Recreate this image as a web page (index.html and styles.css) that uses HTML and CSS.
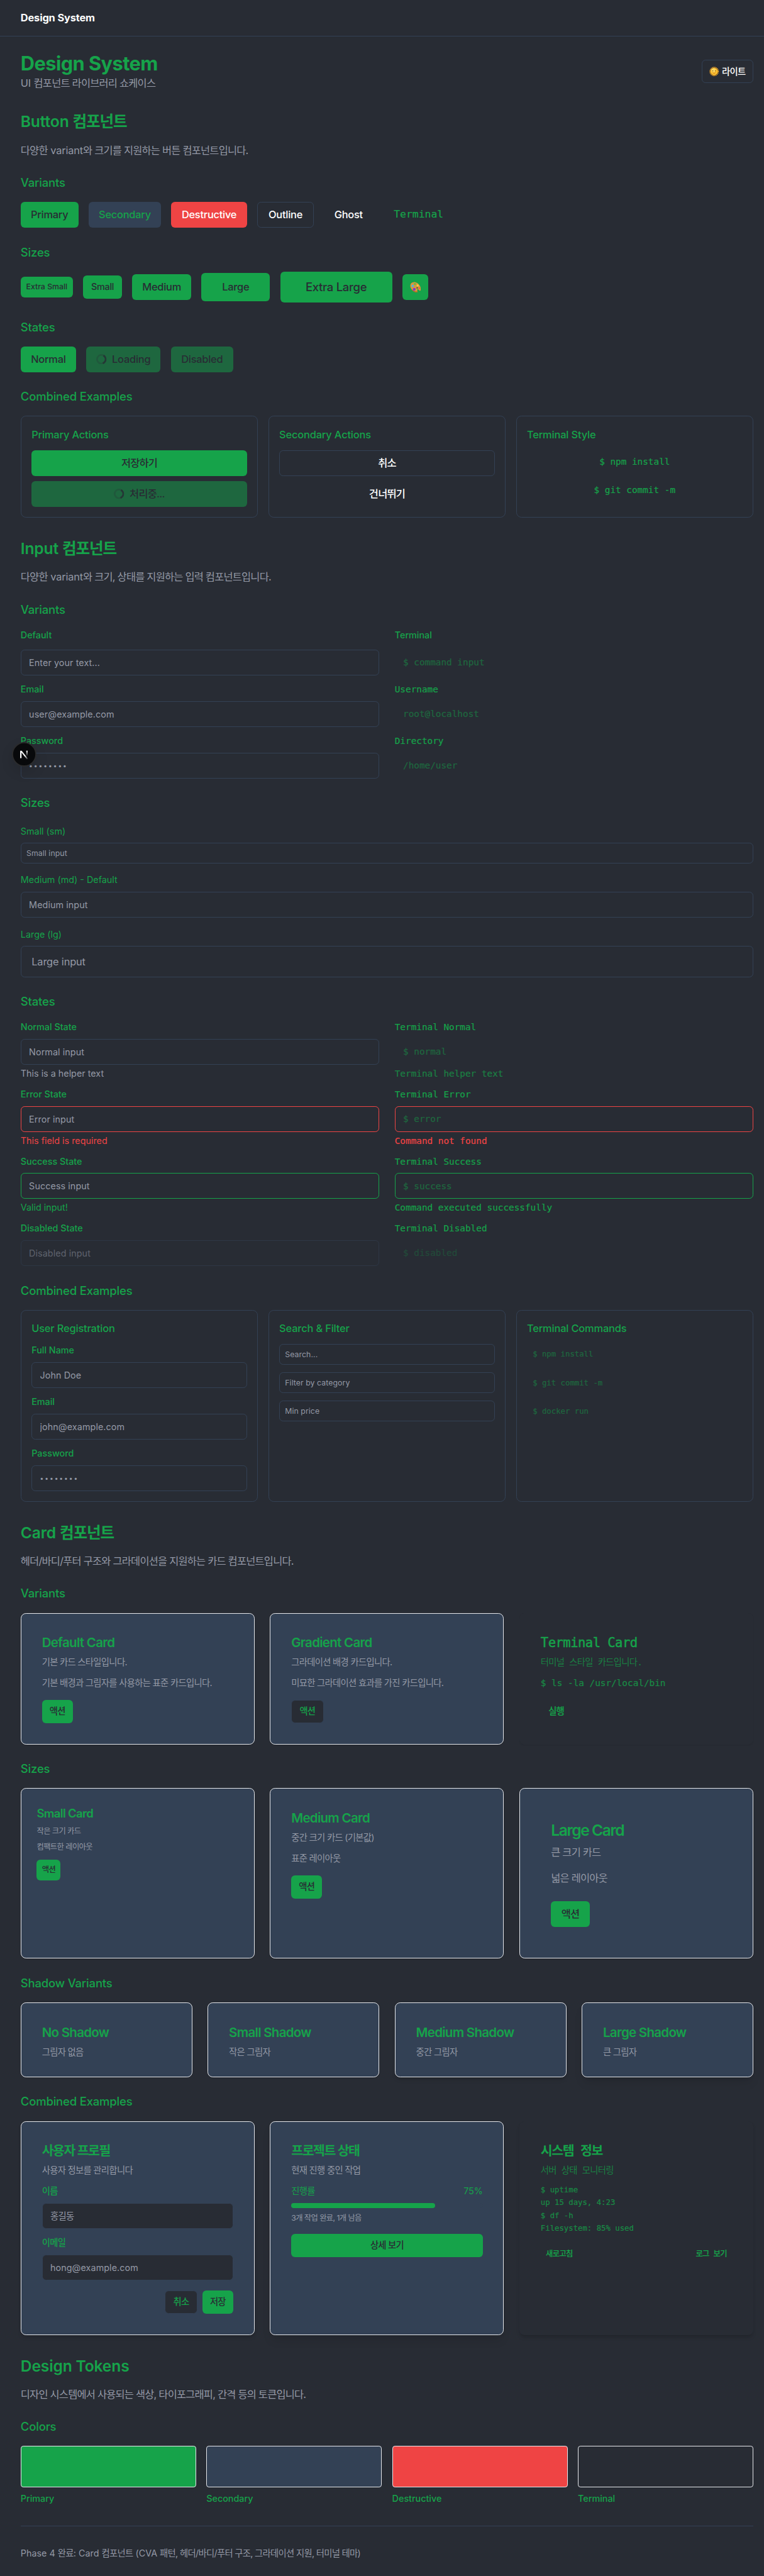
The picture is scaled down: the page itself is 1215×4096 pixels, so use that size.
FILE: index.html
```html
<!DOCTYPE html>
<html lang="ko">
<head>
<meta charset="utf-8">
<title>Design System</title>
<link rel="stylesheet" href="styles.css">
</head>
<body>
<svg class="defs" width="0" height="0" aria-hidden="true">
  <symbol id="spinner" viewBox="0 0 24 24">
    <g transform="rotate(160 12 12)">
      <circle cx="12" cy="12" r="10" fill="none" stroke="currentColor" stroke-width="4" opacity=".25"/>
      <path fill="currentColor" opacity=".75" d="M4 12a8 8 0 018-8V0C5.373 0 0 5.373 0 12h4zm2 5.291A7.962 7.962 0 014 12H0c0 3.042 1.135 5.824 3 7.938l3-2.647z"/>
    </g>
  </symbol>
</svg>
<div class="page">
  <header class="topbar">Design System</header>
  <main class="main">
    <div class="intro">
      <div>
        <h1>Design System</h1>
        <p class="lead">UI <span class="ko">컴포넌트 라이브러리 쇼케이스</span></p>
      </div>
      <button class="btn btn-sm btn-outline theme-toggle">
        <svg viewBox="0 0 32 32" width="15" height="15"><circle cx="16" cy="16" r="13.5" fill="none" stroke="#f9a825" stroke-width="4" stroke-dasharray="2.6 1.64"/><circle cx="16" cy="16" r="12" fill="#fdc02f"/><circle cx="14" cy="12" r="7" fill="#ffd75e"/><circle cx="11.5" cy="14" r="1.7" fill="#6b4a1c"/><circle cx="20.5" cy="14" r="1.7" fill="#6b4a1c"/><path d="M11 20q5 4 10 0" fill="none" stroke="#b5651d" stroke-width="1.6"/></svg>
        <span class="ko">라이트</span>
      </button>
    </div>

    <section class="section">
      <h2>Button <span class="ko">컴포넌트</span></h2>
      <p class="desc"><span class="ko">다양한</span> variant<span class="ko">와 크기를 지원하는 버튼 컴포넌트입니다.</span></p>
      <h3>Variants</h3>
      <div class="row">
        <button class="btn w-primary">Primary</button>
        <button class="btn btn-secondary w-secondary">Secondary</button>
        <button class="btn btn-destructive w-destructive">Destructive</button>
        <button class="btn btn-outline w-outline">Outline</button>
        <button class="btn btn-ghost w-ghost">Ghost</button>
        <button class="btn btn-terminal">Terminal</button>
      </div>
      <h3>Sizes</h3>
      <div class="row">
        <button class="btn btn-xs w-xs">Extra Small</button>
        <button class="btn btn-sm w-sm">Small</button>
        <button class="btn w-md">Medium</button>
        <button class="btn btn-lg w-lg">Large</button>
        <button class="btn btn-xl w-xl">Extra Large</button>
        <button class="btn btn-icon"><svg viewBox="0 0 32 32" width="17" height="17"><path d="M8 2C14-1 24 3 29 12c3 6 4 12 1 14-3 1-4-4-7-4s-2 3-1 5c1 3-1 5-5 4C8 29 0 19 1 10c1-4 3-7 7-8z" fill="#d9973f"/><path d="M2 17c3 8 9 13 16 14 3 0 5-1 4-4-1 2-4 2-7 1C9 26 4 22 2 17z" fill="#a8641f"/><circle cx="8" cy="12" r="3.4" fill="#4ab4e8"/><circle cx="14.5" cy="6.5" r="3.2" fill="#6bbf3a"/><circle cx="22.5" cy="11" r="3" fill="#f4d13c"/><circle cx="27" cy="19" r="2.5" fill="#ee5a45"/><circle cx="12.5" cy="22" r="4" fill="#8a34c9"/><ellipse cx="21" cy="18" rx="2" ry="2.4" fill="#16703a"/></svg></button>
      </div>
      <h3>States</h3>
      <div class="row">
        <button class="btn w-normal">Normal</button>
        <button class="btn is-off w-loading"><svg class="spin"><use href="#spinner"/></svg>Loading</button>
        <button class="btn is-off w-disabled">Disabled</button>
      </div>
      <h3>Combined Examples</h3>
      <div class="grid3 tight">
        <div class="panel">
          <h4>Primary Actions</h4>
          <div class="stack8">
            <button class="btn ko">저장하기</button>
            <button class="btn is-off"><svg class="spin"><use href="#spinner"/></svg><span class="ko">처리중...</span></button>
          </div>
        </div>
        <div class="panel">
          <h4>Secondary Actions</h4>
          <div class="stack8">
            <button class="btn btn-outline ko">취소</button>
            <button class="btn btn-ghost ko">건너뛰기</button>
          </div>
        </div>
        <div class="panel">
          <h4>Terminal Style</h4>
          <div class="stack8">
            <button class="btn btn-sm btn-terminal">$ npm install</button>
            <button class="btn btn-sm btn-terminal">$ git commit -m</button>
          </div>
        </div>
      </div>
    </section>

    <section class="section">
      <h2>Input <span class="ko">컴포넌트</span></h2>
      <p class="desc"><span class="ko">다양한</span> variant<span class="ko">와 크기, 상태를 지원하는 입력 컴포넌트입니다.</span></p>
      <h3>Variants</h3>
      <div class="grid2">
        <div class="fields">
          <div class="field wide"><label>Default</label><input placeholder="Enter your text..."></div>
          <div class="field"><label>Email</label><input placeholder="user@example.com"></div>
          <div class="field"><label>Password</label><input class="dots" placeholder="••••••••"></div>
        </div>
        <div class="fields">
          <div class="field wide"><label>Terminal</label><input class="term" placeholder="$ command input"></div>
          <div class="field"><label class="mono">Username</label><input class="term" placeholder="root@localhost"></div>
          <div class="field"><label class="mono">Directory</label><input class="term" placeholder="/home/user"></div>
        </div>
      </div>
      <h3>Sizes</h3>
      <div class="fields sizes">
        <div class="field"><label>Small (sm)</label><input class="in-sm" placeholder="Small input"></div>
        <div class="field"><label>Medium (md) - Default</label><input placeholder="Medium input"></div>
        <div class="field"><label>Large (lg)</label><input class="in-lg" placeholder="Large input"></div>
      </div>
      <h3>States</h3>
      <div class="grid2">
        <div class="fields">
          <div class="field"><label>Normal State</label><input placeholder="Normal input"><p class="help">This is a helper text</p></div>
          <div class="field"><label>Error State</label><input class="err" placeholder="Error input"><p class="help help-err">This field is required</p></div>
          <div class="field"><label>Success State</label><input class="ok" placeholder="Success input"><p class="help help-ok">Valid input!</p></div>
          <div class="field"><label>Disabled State</label><input class="off" placeholder="Disabled input"></div>
        </div>
        <div class="fields mono">
          <div class="field"><label>Terminal Normal</label><input class="term" placeholder="$ normal"><p class="help help-term">Terminal helper text</p></div>
          <div class="field"><label>Terminal Error</label><input class="term err" placeholder="$ error"><p class="help help-err">Command not found</p></div>
          <div class="field"><label>Terminal Success</label><input class="term ok" placeholder="$ success"><p class="help help-ok">Command executed successfully</p></div>
          <div class="field"><label>Terminal Disabled</label><input class="term off" placeholder="$ disabled"></div>
        </div>
      </div>
      <h3>Combined Examples</h3>
      <div class="grid3 tight">
        <div class="panel">
          <h4>User Registration</h4>
          <div class="fields">
            <div class="field"><label>Full Name</label><input placeholder="John Doe"></div>
            <div class="field"><label>Email</label><input placeholder="john@example.com"></div>
            <div class="field"><label>Password</label><input class="dots" placeholder="••••••••"></div>
          </div>
        </div>
        <div class="panel">
          <h4>Search &amp; Filter</h4>
          <div class="fields">
            <input class="in-sm" placeholder="Search...">
            <input class="in-sm" placeholder="Filter by category">
            <input class="in-sm" placeholder="Min price">
          </div>
        </div>
        <div class="panel">
          <h4>Terminal Commands</h4>
          <div class="fields">
            <input class="in-sm term" placeholder="$ npm install">
            <input class="in-sm term" placeholder="$ git commit -m">
            <input class="in-sm term" placeholder="$ docker run">
          </div>
        </div>
      </div>
    </section>

    <section class="section">
      <h2>Card <span class="ko">컴포넌트</span></h2>
      <p class="desc ko">헤더/바디/푸터 구조와 그라데이션을 지원하는 카드 컴포넌트입니다.</p>
      <h3>Variants</h3>
      <div class="grid3">
        <article class="card">
          <h5>Default Card</h5>
          <p class="sub ko">기본 카드 스타일입니다.</p>
          <p class="body ko">기본 배경과 그림자를 사용하는 표준 카드입니다.</p>
          <div class="actions"><button class="btn btn-sm w-act ko">액션</button></div>
        </article>
        <article class="card">
          <h5>Gradient Card</h5>
          <p class="sub ko">그라데이션 배경 카드입니다.</p>
          <p class="body ko">미묘한 그라데이션 효과를 가진 카드입니다.</p>
          <div class="actions"><button class="btn btn-sm btn-dark ko">액션</button></div>
        </article>
        <article class="card card-term mono">
          <h5>Terminal Card</h5>
          <p class="sub ko">터미널 스타일 카드입니다.</p>
          <p class="body">$ ls -la /usr/local/bin</p>
          <div class="actions"><button class="btn btn-sm btn-terminal strong ko">실행</button></div>
        </article>
      </div>
      <h3>Sizes</h3>
      <div class="grid3">
        <article class="card card-sm">
          <h5>Small Card</h5>
          <p class="sub ko">작은 크기 카드</p>
          <p class="body ko">컴팩트한 레이아웃</p>
          <div class="actions"><button class="btn btn-xs w-act-xs ko">액션</button></div>
        </article>
        <article class="card">
          <h5>Medium Card</h5>
          <p class="sub ko">중간 크기 카드 (기본값)</p>
          <p class="body ko">표준 레이아웃</p>
          <div class="actions"><button class="btn btn-sm w-act ko">액션</button></div>
        </article>
        <article class="card card-lg">
          <h5>Large Card</h5>
          <p class="sub ko">큰 크기 카드</p>
          <p class="body ko">넓은 레이아웃</p>
          <div class="actions"><button class="btn w-act-lg ko">액션</button></div>
        </article>
      </div>
      <h3>Shadow Variants</h3>
      <div class="grid4">
        <article class="card short sh-none"><h5>No Shadow</h5><p class="sub ko">그림자 없음</p></article>
        <article class="card short"><h5>Small Shadow</h5><p class="sub ko">작은 그림자</p></article>
        <article class="card short sh-md"><h5>Medium Shadow</h5><p class="sub ko">중간 그림자</p></article>
        <article class="card short sh-lg"><h5>Large Shadow</h5><p class="sub ko">큰 그림자</p></article>
      </div>
      <h3>Combined Examples</h3>
      <div class="grid3">
        <article class="card sh-md">
          <h5 class="ko-title">사용자 프로필</h5>
          <p class="sub ko">사용자 정보를 관리합니다</p>
          <div class="fields profile">
            <div class="field"><label class="ko">이름</label><input class="fill ko" placeholder="홍길동"></div>
            <div class="field"><label class="ko">이메일</label><input class="fill" placeholder="hong@example.com"></div>
          </div>
          <div class="actions end"><button class="btn btn-sm btn-dark ko">취소</button><button class="btn btn-sm w-act ko">저장</button></div>
        </article>
        <article class="card sh-lg">
          <h5 class="ko-title">프로젝트 상태</h5>
          <p class="sub ko">현재 진행 중인 작업</p>
          <div class="meter-row"><span class="ko">진행률</span><span>75%</span></div>
          <div class="meter"><div class="meter-bar" style="width:75%"></div></div>
          <p class="note ko">3개 작업 완료, 1개 남음</p>
          <div class="stack8"><button class="btn btn-sm ko">상세 보기</button></div>
        </article>
        <article class="card card-term sh-md mono">
          <h5 class="ko-title">시스템 정보</h5>
          <p class="sub ko">서버 상태 모니터링</p>
          <div class="log"><p>$ uptime</p><p>up 15 days, 4:23</p><p>$ df -h</p><p>Filesystem: 85% used</p></div>
          <div class="actions between"><button class="btn btn-xs btn-terminal strong ko">새로고침</button><button class="btn btn-xs btn-terminal strong ko">로그 보기</button></div>
        </article>
      </div>
    </section>

    <section class="section">
      <h2>Design Tokens</h2>
      <p class="desc ko">디자인 시스템에서 사용되는 색상, 타이포그래피, 간격 등의 토큰입니다.</p>
      <h3>Colors</h3>
      <div class="grid4 tight">
        <div class="token"><div class="swatch c-primary"></div><p>Primary</p></div>
        <div class="token"><div class="swatch c-secondary"></div><p>Secondary</p></div>
        <div class="token"><div class="swatch c-destructive"></div><p>Destructive</p></div>
        <div class="token"><div class="swatch"></div><p>Terminal</p></div>
      </div>
    </section>

    <footer class="foot">Phase 4 <span class="ko">완료</span>: Card <span class="ko">컴포넌트</span> (CVA <span class="ko">패턴, 헤더/바디/푸터 구조, 그라데이션 지원, 터미널 테마)</span></footer>
  </main>
  <div class="dev-badge">
    <svg viewBox="0 0 40 40" width="38" height="38">
      <defs>
        <linearGradient id="na" x1="22" y1="22" x2="26.5" y2="28" gradientUnits="userSpaceOnUse"><stop stop-color="#fff"/><stop offset="1" stop-color="#fff" stop-opacity="0"/></linearGradient>
        <linearGradient id="nb" x1="0" y1="14" x2="0" y2="23" gradientUnits="userSpaceOnUse"><stop stop-color="#fff"/><stop offset="1" stop-color="#fff" stop-opacity="0"/></linearGradient>
      </defs>
      <circle cx="20" cy="20" r="19" fill="#08090b" stroke="#2b2b2c" stroke-width="1.8"/>
      <path d="M13.4 26.2V14h2.5l10.2 12.9-1.6 1.3L15.6 17v9.2z" fill="url(#na)"/>
      <rect x="23.4" y="14" width="2.2" height="9" fill="url(#nb)"/>
    </svg>
  </div>
</div>
</body>
</html>
```
FILE: styles.css
```css
:root {
  --bg: #282c34;
  --green: #16a34a;
  --slate: #334155;
  --red: #ef4444;
  --muted: #9499a6;
  --line: #e5e7eb;
  --sans: Inter, "Noto Sans CJK KR", sans-serif;
  --mono: "DejaVu Sans Mono", "Noto Sans CJK KR", monospace;
}

* { box-sizing: border-box; margin: 0; }

body { background: var(--bg); overflow: hidden; }

.defs { position: absolute; }

.page {
  position: relative;
  zoom: 1.0257;
  width: 1185px;
  height: 3993px;
  overflow: hidden;
  background: var(--bg);
  color: var(--green);
  font: 400 16px/24px var(--sans);
  letter-spacing: -0.01em;
}

.ko { letter-spacing: -0.048em; }
.mono { font-family: var(--mono); letter-spacing: 0; }

.topbar {
  height: 57px;
  padding: 16px 32px;
  border-bottom: 1px solid var(--slate);
  color: #fff;
  font-weight: 700;
}

.main { width: 1200px; padding: 24px 32px; }

.intro { display: flex; justify-content: space-between; align-items: center; }

h1 { font-size: 30px; line-height: 36px; font-weight: 700; letter-spacing: -0.018em; }
h2 { font-size: 24px; line-height: 32px; font-weight: 600; }
h3 { margin: 24px 0 16px; font-size: 18px; line-height: 28px; font-weight: 500; }
h4 { margin-bottom: 12px; font-size: 16px; line-height: 24px; font-weight: 500; }
h5 { font-size: 20px; line-height: 28px; font-weight: 600; letter-spacing: -0.035em; }
.ko-title { letter-spacing: -0.07em; }

.lead, .desc { color: var(--muted); }
.section { margin-top: 32px; }
.desc { margin-top: 16px; }

.row { display: flex; align-items: center; gap: 16px; }
.grid2 { display: grid; grid-template-columns: repeat(2, 1fr); gap: 24px; }
.grid3 { display: grid; grid-template-columns: repeat(3, 1fr); gap: 24px; }
.grid4 { display: grid; grid-template-columns: repeat(4, 1fr); gap: 24px; }
.tight { gap: 16px; }
.stack8 { display: flex; flex-direction: column; gap: 8px; }

.panel { padding: 16px; border: 1px solid var(--slate); border-radius: 8px; }

/* buttons */
.btn {
  display: inline-flex;
  align-items: center;
  justify-content: center;
  height: 40px;
  padding: 0 16px;
  border: 0;
  border-radius: 6px;
  background: var(--green);
  color: var(--bg);
  font: 500 16px/24px var(--sans);
  letter-spacing: -0.015em;
  white-space: nowrap;
}
.btn-xs { height: 32px; padding: 0 8px; font-size: 12px; letter-spacing: 0; }
.btn-sm { height: 36px; padding: 0 12px; font-size: 14px; }
.btn-lg { height: 44px; padding: 0 32px; }
.btn-xl { height: 48px; padding: 0 40px; font-size: 18px; }
.btn-icon { width: 40px; padding: 0; }
.btn-secondary { background: var(--slate); color: var(--green); }
.btn-destructive { background: var(--red); color: #fff; }
.btn-outline { border: 1px solid var(--slate); background: none; color: #fff; }
.btn-ghost { background: none; color: #fff; }
.btn-dark { width: 50px; border: 1px solid var(--slate); background: var(--bg); color: var(--green); }
.btn-terminal { background: none; color: var(--green); font-family: var(--mono); font-weight: 400; letter-spacing: 0; -webkit-text-stroke: .2px; }
.btn.ko { letter-spacing: -0.05em; }
.strong { font-weight: 500; }
.is-off { opacity: .5; }
.theme-toggle { width: 80px; gap: 4px; padding: 0; }
.spin { width: 16px; height: 16px; margin-right: 8px; }

.w-primary { width: 89.5px; padding: 0; }
.w-secondary { width: 112px; padding: 0; }
.w-destructive { width: 117.5px; padding: 0; }
.w-outline { width: 87.5px; padding: 0; }
.w-ghost { width: 76px; padding: 0; }
.w-xs { width: 81px; padding: 0; }
.w-sm { width: 60px; padding: 0; }
.w-md { width: 91.5px; padding: 0; }
.w-lg { width: 106px; padding: 0; }
.w-xl { width: 173.5px; padding: 0; }
.w-normal { width: 86px; padding: 0; }
.w-loading { width: 115px; padding: 0; }
.w-disabled { width: 96.5px; padding: 0; }
.w-act { width: 48px; padding: 0; }
.w-act-xs { width: 37px; padding: 0; }
.w-act-lg { width: 60px; padding: 0; }

/* inputs */
.fields { display: flex; flex-direction: column; gap: 12px; }
.field { display: flex; flex-direction: column; gap: 8px; }
.field.wide { gap: 12px; }
label { font-size: 14px; line-height: 20px; font-weight: 500; }
label:not(.ko):not(.mono) { letter-spacing: 0; }
.mono label, label.mono { -webkit-text-stroke: .2px; }
input {
  width: 100%;
  height: 40px;
  padding: 0 12px;
  border: 1px solid var(--slate);
  border-radius: 6px;
  background: none;
  font: 400 14px/20px var(--sans);
  letter-spacing: 0.005em;
}
input::placeholder { color: var(--muted); opacity: 1; }
.in-sm { height: 32px; padding: 0 8px; font-size: 12px; }
.in-lg { height: 48px; padding: 0 16px; font-size: 16px; letter-spacing: -0.01em; }
.dots { font-size: 10px; letter-spacing: 0.19em; }
.term { border-color: transparent; font-family: var(--mono); letter-spacing: 0; }
.term::placeholder { color: var(--green); opacity: .5; -webkit-text-stroke: .2px; }
.err { border-color: var(--red); }
.ok { border-color: var(--green); }
.off { opacity: .5; }
.fill { background: var(--bg); }
input.ko { letter-spacing: -0.048em; }

.help { margin-top: -4px; color: var(--muted); font-size: 14px; line-height: 20px; letter-spacing: 0; }
.help-err { color: var(--red); }
.help-ok { color: var(--green); }
.help-term { color: var(--green); opacity: .7; }
.mono .help { -webkit-text-stroke: .2px; }

.sizes { gap: 16px; margin-top: 20px; }
.sizes label { font-weight: 400; }

/* cards */
.card {
  display: flex;
  flex-direction: column;
  padding: 32px;
  border: 1px solid var(--line);
  border-radius: 8px;
  background: var(--slate);
  box-shadow: 0 1px 2px rgba(0, 0, 0, .05);
}
.sub, .body { color: var(--muted); font-size: 14px; line-height: 20px; }
.sub { margin-top: 6px; }
.body { margin-top: 12px; }
.actions { display: flex; gap: 8px; margin-top: 16px; }
.end { justify-content: flex-end; }
.between { justify-content: space-between; }

.card-sm { padding: 24px; }
.card-sm h5 { font-size: 18px; }
.card-sm .sub, .card-sm .body { font-size: 12px; line-height: 16px; }
.card-sm .body { margin-top: 8px; }
.card-sm .actions { margin-top: 12px; }

.card-lg { padding: 48px; }
.card-lg h5 { font-size: 24px; line-height: 32px; letter-spacing: -0.058em; }
.card-lg .sub, .card-lg .body { font-size: 16px; line-height: 24px; }
.card-lg .body { margin-top: 16px; }
.card-lg .actions { margin-top: 24px; }

.card-term { border-color: transparent; background: var(--bg); }
.card-term h5 { letter-spacing: -0.025em; font-weight: 400; -webkit-text-stroke: .5px; }
.card-term h5.ko-title { font-weight: 600; letter-spacing: -0.07em; -webkit-text-stroke: 0; }
.card-term .sub { color: var(--green); opacity: .7; }
.card-term .body { color: var(--green); opacity: .8; -webkit-text-stroke: .2px; }

.short { padding-bottom: 28px; }
.sh-none { box-shadow: none; }
.sh-md { box-shadow: 0 4px 6px -1px rgba(0, 0, 0, .1), 0 2px 4px -2px rgba(0, 0, 0, .1); }
.sh-lg { box-shadow: 0 10px 15px -3px rgba(0, 0, 0, .1), 0 4px 6px -4px rgba(0, 0, 0, .1); }

.profile { margin-top: 12px; }
.meter-row { display: flex; justify-content: space-between; margin-top: 12px; font-size: 14px; line-height: 20px; }
.meter { height: 8px; margin-top: 8px; border-radius: 4px; background: var(--slate); }
.meter-bar { height: 8px; border-radius: 4px; background: var(--green); }
.note { margin: 8px 0 16px; color: var(--muted); font-size: 12px; line-height: 16px; }
.log { display: flex; flex-direction: column; gap: 4px; margin-top: 12px; font-size: 12px; line-height: 16px; opacity: .8; -webkit-text-stroke: .2px; }

/* tokens */
.swatch { height: 64px; border: 1px solid var(--line); border-radius: 4px; }
.c-primary { background: var(--green); }
.c-secondary { background: var(--slate); }
.c-destructive { background: var(--red); }
.token p { margin-top: 8px; font-size: 14px; line-height: 20px; font-weight: 500; letter-spacing: 0; }

.foot { margin-top: 32px; padding-top: 32px; border-top: 1px solid var(--slate); color: var(--muted); font-size: 14px; line-height: 20px; letter-spacing: 0; }

.dev-badge { position: absolute; left: 19px; top: 1150px; width: 38px; height: 38px; border-radius: 50%; box-shadow: 0 8px 20px rgba(0, 0, 0, .12); }
.dev-badge svg { display: block; }
```
